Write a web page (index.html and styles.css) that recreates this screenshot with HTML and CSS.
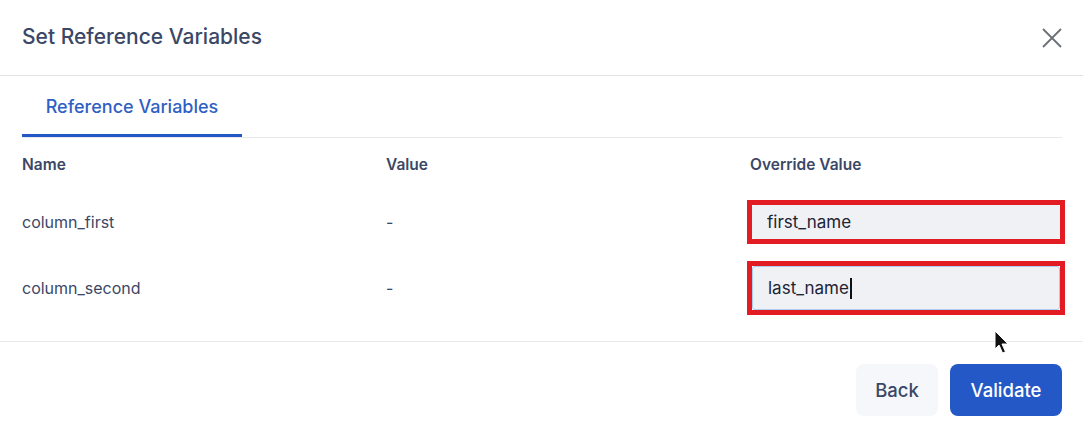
FILE: index.html
```html
<!DOCTYPE html>
<html lang="en">
<head>
  <meta charset="UTF-8">
  <title>Set Reference Variables</title>
  <link rel="stylesheet" href="styles.css">
</head>
<body>
  <div class="modal">
    <div class="modal-header">
      <h2>Set Reference Variables</h2>
      <button class="close-btn" aria-label="Close">
        <svg width="20" height="20" viewBox="0 0 20 20"><path d="M1 1 L19 19 M19 1 L1 19" stroke="#6b6f76" stroke-width="1.8" fill="none"/></svg>
      </button>
    </div>

    <div class="tabs">
      <div class="tab active">Reference Variables</div>
    </div>

    <div class="var-table">
      <div class="th">Name</div>
      <div class="th">Value</div>
      <div class="th">Override Value</div>

      <div class="td">column_first</div>
      <div class="td">-</div>
      <div class="td"><div class="mark"><input type="text" value="first_name"></div></div>

      <div class="td">column_second</div>
      <div class="td">-</div>
      <div class="td"><div class="mark"><input type="text" class="focused" value="last_name"><span class="caret"></span></div></div>
    </div>

    <div class="modal-footer">
      <button class="btn btn-back">Back</button>
      <button class="btn btn-primary">Validate</button>
    </div>

    <svg class="pointer" width="16" height="26" viewBox="0 0 16 26"><path d="M1 1 L1 19 L5 15 L8.5 23 L11.5 21.8 L8 14 L14 14 Z" fill="#111" stroke="#fff" stroke-width="1"/></svg>
  </div>
</body>
</html>
```

FILE: styles.css
```css
* {
  margin: 0;
  padding: 0;
  box-sizing: border-box;
  font-family: Inter, "Noto Sans", sans-serif;
}
body {
  background-color: #ffffff;
  width: 1083px;
  height: 438px;
  overflow: hidden;
}
.modal {
  position: relative;
  height: 438px;
  display: flex;
  flex-direction: column;
}
.modal-header {
  height: 76px;
  padding: 0 20px 0 22px;
  display: flex;
  align-items: center;
  justify-content: space-between;
  border-bottom: 1px solid #e1e3e6;
}
.modal-header h2 {
  font-size: 21px;
  font-weight: 500;
  color: #3b4766;
  margin-top: -3px;
}
.close-btn {
  background: none;
  border: none;
  width: 22px;
  height: 22px;
  display: flex;
  align-items: center;
  justify-content: center;
}
.tabs {
  margin: 0 21px 0 22px;
  display: flex;
  border-bottom: 1px solid #e6e8eb;
}
.tab {
  width: 220px;
  height: 61px;
  display: flex;
  align-items: center;
  justify-content: center;
  font-size: 18px;
  font-weight: 500;
  color: #2f5fc4;
  padding-top: 3px;
}
.tab.active {
  border-bottom: 3px solid #2458c6;
  border-radius: 2px 2px 0 0;
}
.var-table {
  display: grid;
  grid-template-columns: 364px 364px 1fr;
  grid-template-rows: 26px 78px 66px;
  align-items: center;
  margin: 0 19px 0 22px;
  padding-top: 13px;
}
.th {
  font-size: 15.5px;
  font-weight: 600;
  color: #3b4766;
}
.td {
  display: flex;
  align-items: center;
  height: 100%;
  font-size: 16px;
  color: #3b4766;
}
.var-table .td:nth-child(-n+6) {
  padding-top: 12px;
}
.mark {
  position: relative;
  margin-left: -3px;
  width: 318px;
  border: 5px solid #e31b23;
}
.mark input {
  display: block;
  width: 100%;
  height: 34px;
  padding: 0 15px;
  border: none;
  border-radius: 3px;
  background-color: #eff1f5;
  font-size: 17px;
  color: #1d2433;
  outline: none;
}
.mark input.focused {
  height: 44px;
  border: 1px solid #a9cdee;
  padding-left: 15px;
}
.caret {
  position: absolute;
  left: 98px;
  top: 12px;
  width: 2px;
  height: 21px;
  background-color: #111;
}
.modal-footer {
  margin-top: auto;
  height: 97px;
  border-top: 1px solid #e6e8eb;
  display: flex;
  justify-content: flex-end;
  align-items: flex-start;
  gap: 12px;
  padding: 22px 21px 0 0;
}
.btn {
  height: 52px;
  border: none;
  border-radius: 8px;
  font-size: 18.5px;
  font-weight: 500;
  cursor: pointer;
}
.btn-back {
  width: 82px;
  background-color: #f5f7fa;
  color: #3b4766;
}
.btn-primary {
  width: 112px;
  background-color: #2458c6;
  color: #ffffff;
}
.pointer {
  position: absolute;
  left: 994px;
  top: 330px;
}
```
